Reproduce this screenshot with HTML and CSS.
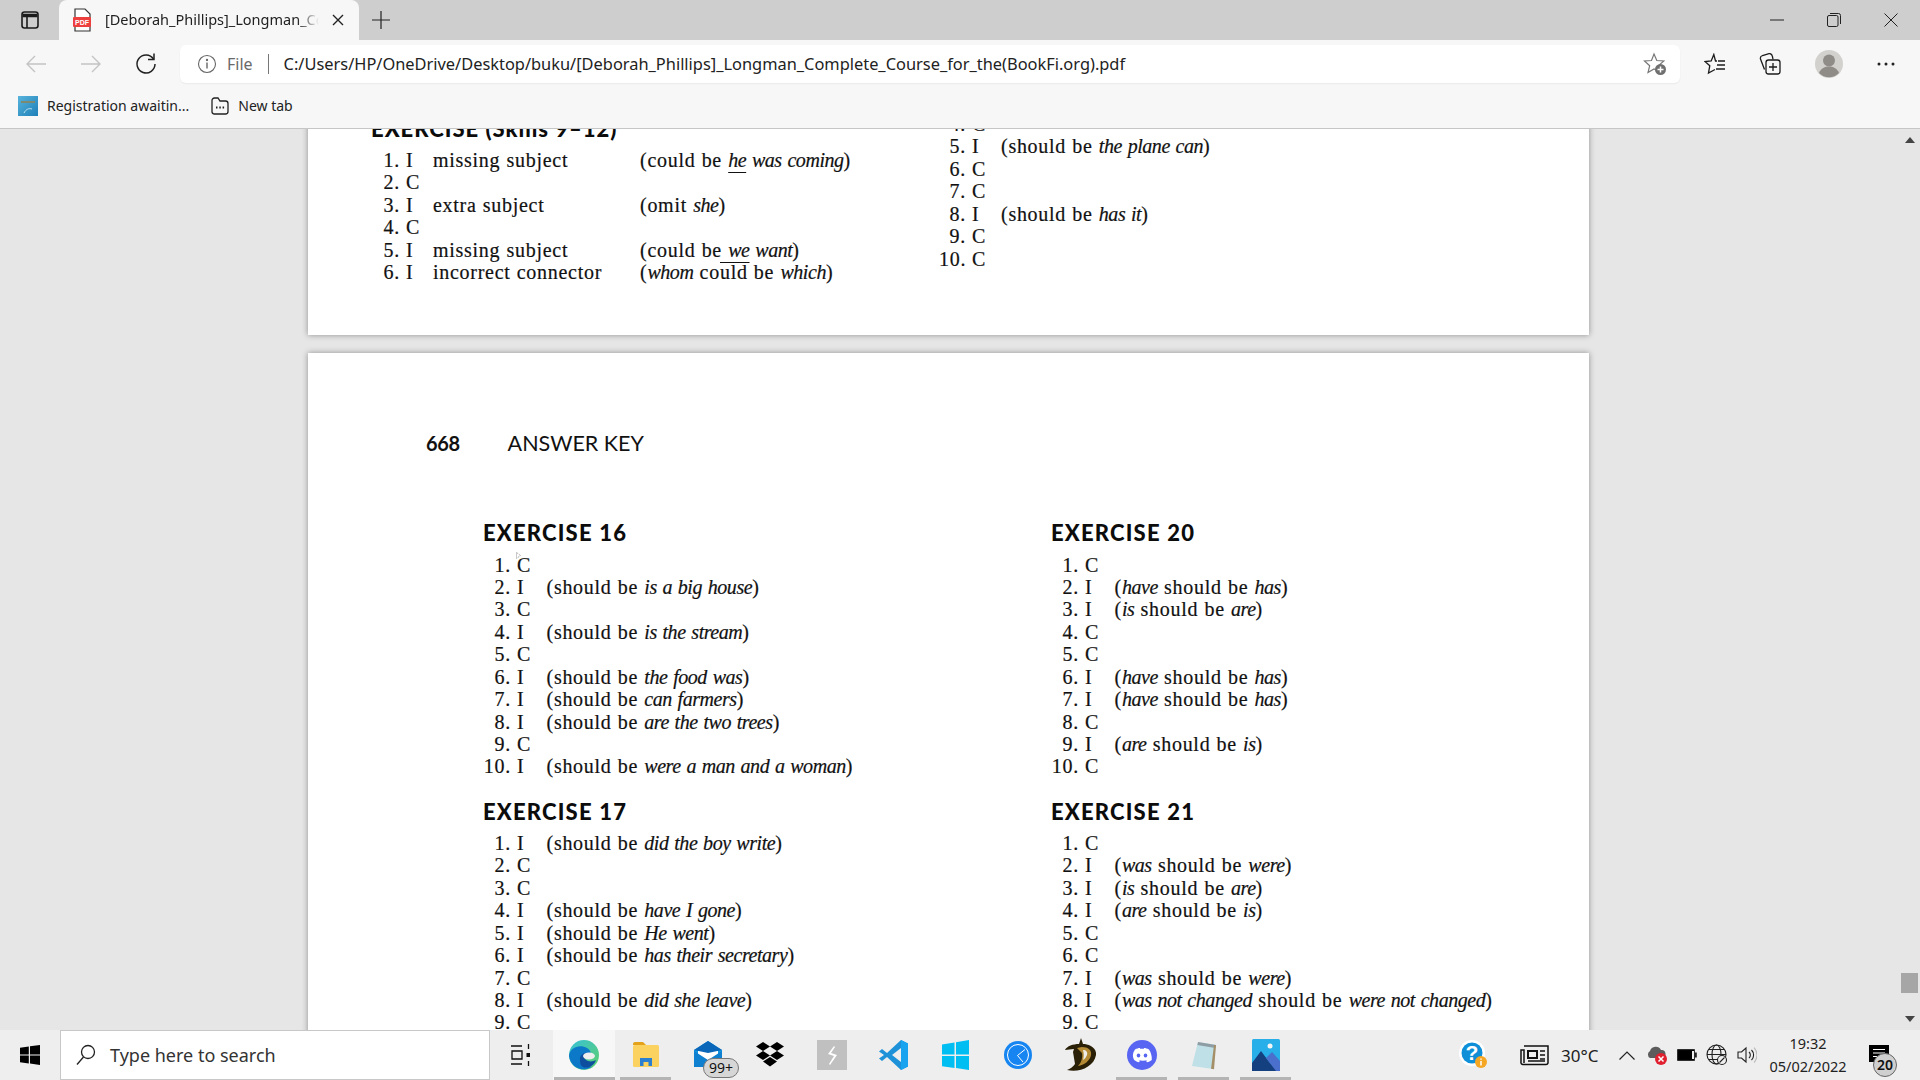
FILE: index.html
```html
<!DOCTYPE html>
<html lang="en">
<head>
<meta charset="utf-8">
<title>Longman Complete Course</title>
<link rel="stylesheet" href="styles.css">
</head>
<body>
<header class="tabstrip">
  <div class="strip-btn">
    <svg width="20" height="20" viewBox="0 0 20 20" fill="none" stroke="#1b1b1b" stroke-width="1.6"><rect x="2" y="2" width="16" height="16" rx="2.5"/><path d="M2.5 5.5h15" stroke-width="3.5"/><path d="M7 5v13"/></svg>
  </div>
  <div class="tab">
    <svg class="tab-icon" width="20" height="24" viewBox="0 0 20 24"><path d="M3 1h10l5 5v17H3z" fill="#fff" stroke="#333" stroke-width="1.2"/><rect x="1" y="9" width="18" height="10" rx="1" fill="#ee3f3f"/><text x="10" y="17" class="pdf-label" text-anchor="middle">PDF</text></svg>
    <span class="tab-title">[Deborah_Phillips]_Longman_Complete_Course_for_the(BookFi.org).pdf</span>
    <svg class="tab-close" width="12" height="12" viewBox="0 0 12 12" stroke="#222" stroke-width="1.4"><path d="M1 1l10 10M11 1L1 11"/></svg>
  </div>
  <div class="new-tab">
    <svg width="18" height="18" viewBox="0 0 18 18" stroke="#222" stroke-width="1.2"><path d="M9 0v18M0 9h18"/></svg>
  </div>
  <div class="win-controls">
    <div class="win-btn"><svg width="14" height="14" viewBox="0 0 14 14" stroke="#222" stroke-width="1"><path d="M0 7h14"/></svg></div>
    <div class="win-btn"><svg width="14" height="14" viewBox="0 0 14 14" fill="none" stroke="#222" stroke-width="1"><rect x=".5" y="2.5" width="10.5" height="11" rx="1.5"/><path d="M3 .5h8.5a2 2 0 0 1 2 2V11"/></svg></div>
    <div class="win-btn"><svg width="14" height="14" viewBox="0 0 14 14" stroke="#222" stroke-width="1"><path d="M.5.5l13 13M13.500.5l-13 13"/></svg></div>
  </div>
</header>

<nav class="toolbar">
  <div class="nav-btn"><svg width="20" height="18" viewBox="0 0 20 18" fill="none" stroke="#c4c4c4" stroke-width="1.4"><path d="M20 9H1M9 1L1 9l8 8"/></svg></div>
  <div class="nav-btn"><svg width="20" height="18" viewBox="0 0 20 18" fill="none" stroke="#c4c4c4" stroke-width="1.4"><path d="M0 9h19M11 1l8 8-8 8"/></svg></div>
  <div class="nav-btn"><svg width="22" height="22" viewBox="0 0 22 22" fill="none" stroke="#222" stroke-width="1.5"><path d="M18.500 6A9 9 0 1 0 20 11"/><path d="M19 .5V6.500h-6"/></svg></div>
  <div class="address">
    <svg class="info" width="20" height="20" viewBox="0 0 20 20" fill="none" stroke="#666" stroke-width="1.1"><circle cx="10" cy="10" r="8.500"/><path d="M10 8.500v6" stroke-width="1.4"/><circle cx="10" cy="6" r=".6" fill="#666"/></svg>
    <span class="scheme">File</span>
    <span class="addr-sep"></span>
    <span class="url">C:/Users/HP/OneDrive/Desktop/buku/[Deborah_Phillips]_Longman_Complete_Course_for_the(BookFi.org).pdf</span>
    <svg class="star-add" width="24" height="24" viewBox="0 0 24 24"><path d="M11 2l2.800 6.500 7 .5-5.300 4.600 1.700 6.600L11 17l-6 3.600 1.700-6.900L1.500 9l7-.5z" fill="none" stroke="#777" stroke-width="1.2"/><circle cx="17.500" cy="17.500" r="5.500" fill="#6f6f6f"/><path d="M17.500 14.500v6M14.500 17.500h6" stroke="#fff" stroke-width="1.500"/></svg>
  </div>
  <div class="tools">
    <div class="tool"><svg width="22" height="22" viewBox="0 0 22 22" fill="none" stroke="#1c1c1c" stroke-width="1.3"><path d="M13 8h-1.500L9.800 1.500 7.200 8 1 8.500l4.800 4.200L4.500 20l6.500-3.500M14 8h7M13 12h8M12 16h9"/></svg></div>
    <div class="tool tool-nudged"><svg width="22" height="22" viewBox="0 0 22 22" fill="none" stroke="#1c1c1c" stroke-width="1.3"><path d="M5.500 16.500L1.500 6C1 4 2 3 3.500 2.500L10 .7c2-.4 3 .5 3.500 3L14 6.500"/><rect x="7" y="7" width="14" height="14" rx="2.500"/><path d="M14 10v8M10 14h8"/></svg></div>
    <div class="tool"><svg width="28" height="28" viewBox="0 0 28 28"><circle cx="14" cy="14" r="14" fill="#d3d1cd"/><circle cx="14" cy="10.500" r="6" fill="#8f8c88"/><path d="M4 23c2-5 6-6.500 10-6.500s8 1.500 10 6.500a14 14 0 0 1-20 0z" fill="#8f8c88"/></svg></div>
    <div class="tool"><svg width="18" height="4" viewBox="0 0 18 4" fill="#222"><circle cx="2" cy="2" r="1.500"/><circle cx="9" cy="2" r="1.500"/><circle cx="16" cy="2" r="1.500"/></svg></div>
  </div>
</nav>

<nav class="bookmarks">
  <div class="bookmark">
    <svg width="20" height="20" viewBox="0 0 20 20"><defs><linearGradient id="bm" x1="0" y1="0" x2="1" y2="1"><stop offset="0" stop-color="#58b4dc"/><stop offset="1" stop-color="#1f7fb8"/></linearGradient></defs><rect width="20" height="20" fill="url(#bm)"/><path d="M3 5h14v2H3z" fill="#7d8a70"/><path d="M6 17c2-4 5-5 8-4" stroke="#bfe3f2" fill="none"/></svg>
    <span>Registration awaitin...</span>
  </div>
  <div class="bookmark">
    <svg width="18" height="18" viewBox="0 0 18 18" fill="none" stroke="#222" stroke-width="1.3"><path d="M1 5V3.500A2.500 2.500 0 0 1 3.500 1H7l2 3h5.500A2.500 2.500 0 0 1 17 6.500v8a2.500 2.500 0 0 1-2.500 2.500h-11A2.500 2.500 0 0 1 1 14.500z"/><path d="M5 10.500h1.500M8.300 10.500h1.500M11.600 10.500h1.500" stroke-width="1.800"/></svg>
    <span>New tab</span>
  </div>
</nav>

<main class="workspace">
  <div class="viewer">
    <section class="page page-first">
      <div class="col col-first">
        <h2 class="ex-title">EXERCISE (Skills 9–12)</h2>
        <div class="row row-wide"><span class="n">1.</span><span class="a">I</span><span>missing subject</span><span>(could be <i><u>he</u> was coming</i>)</span></div>
        <div class="row row-wide"><span class="n">2.</span><span class="a">C</span></div>
        <div class="row row-wide"><span class="n">3.</span><span class="a">I</span><span>extra subject</span><span>(omit <i>she</i>)</span></div>
        <div class="row row-wide"><span class="n">4.</span><span class="a">C</span></div>
        <div class="row row-wide"><span class="n">5.</span><span class="a">I</span><span>missing subject</span><span>(could be <i><u>we</u> want</i>)</span></div>
        <div class="row row-wide"><span class="n">6.</span><span class="a">I</span><span>incorrect connector</span><span>(<i>whom</i> co<span class="ou">uld</span> be <i>which</i>)</span></div>
      </div>
      <div class="col col-second">
        <div class="row row-narrow"><span class="n">4.</span><span class="a">C</span></div>
        <div class="row row-narrow"><span class="n">5.</span><span class="a">I</span><span>(should be <i>the plane can</i>)</span></div>
        <div class="row row-narrow"><span class="n">6.</span><span class="a">C</span></div>
        <div class="row row-narrow"><span class="n">7.</span><span class="a">C</span></div>
        <div class="row row-narrow"><span class="n">8.</span><span class="a">I</span><span>(should be <i>has it</i>)</span></div>
        <div class="row row-narrow"><span class="n">9.</span><span class="a">C</span></div>
        <div class="row row-narrow"><span class="n">10.</span><span class="a">C</span></div>
      </div>
    </section>

    <section class="page page-second">
      <div class="running-head"><b>668</b><span>ANSWER KEY</span></div>
      <div class="columns">
        <div class="col">
          <h2 class="ex-title">EXERCISE 16</h2>
          <div class="row"><span class="n">1.</span><span class="a">C<svg class="cursor" width="6" height="8" viewBox="0 0 6 8" fill="none" stroke="#777" stroke-width=".8" stroke-dasharray="1 1"><path d="M.5.500v6l4-3z"/></svg></span></div>
          <div class="row"><span class="n">2.</span><span class="a">I</span><span>(should be <i>is a big house</i>)</span></div>
          <div class="row"><span class="n">3.</span><span class="a">C</span></div>
          <div class="row"><span class="n">4.</span><span class="a">I</span><span>(should be <i>is the stream</i>)</span></div>
          <div class="row"><span class="n">5.</span><span class="a">C</span></div>
          <div class="row"><span class="n">6.</span><span class="a">I</span><span>(should be <i>the food was</i>)</span></div>
          <div class="row"><span class="n">7.</span><span class="a">I</span><span>(should be <i>can farmers</i>)</span></div>
          <div class="row"><span class="n">8.</span><span class="a">I</span><span>(should be <i>are the two trees</i>)</span></div>
          <div class="row"><span class="n">9.</span><span class="a">C</span></div>
          <div class="row"><span class="n">10.</span><span class="a">I</span><span>(should be <i>were a man and a woman</i>)</span></div>
          <h2 class="ex-title ex-next">EXERCISE 17</h2>
          <div class="row"><span class="n">1.</span><span class="a">I</span><span>(should be <i>did the boy write</i>)</span></div>
          <div class="row"><span class="n">2.</span><span class="a">C</span></div>
          <div class="row"><span class="n">3.</span><span class="a">C</span></div>
          <div class="row"><span class="n">4.</span><span class="a">I</span><span>(should be <i>have I gone</i>)</span></div>
          <div class="row"><span class="n">5.</span><span class="a">I</span><span>(should be <i>He went</i>)</span></div>
          <div class="row"><span class="n">6.</span><span class="a">I</span><span>(should be <i>has their secretary</i>)</span></div>
          <div class="row"><span class="n">7.</span><span class="a">C</span></div>
          <div class="row"><span class="n">8.</span><span class="a">I</span><span>(should be <i>did she leave</i>)</span></div>
          <div class="row"><span class="n">9.</span><span class="a">C</span></div>
        </div>
        <div class="col">
          <h2 class="ex-title">EXERCISE 20</h2>
          <div class="row"><span class="n">1.</span><span class="a">C</span></div>
          <div class="row"><span class="n">2.</span><span class="a">I</span><span>(<i>have</i> should be <i>has</i>)</span></div>
          <div class="row"><span class="n">3.</span><span class="a">I</span><span>(<i>is</i> should be <i>are</i>)</span></div>
          <div class="row"><span class="n">4.</span><span class="a">C</span></div>
          <div class="row"><span class="n">5.</span><span class="a">C</span></div>
          <div class="row"><span class="n">6.</span><span class="a">I</span><span>(<i>have</i> should be <i>has</i>)</span></div>
          <div class="row"><span class="n">7.</span><span class="a">I</span><span>(<i>have</i> should be <i>has</i>)</span></div>
          <div class="row"><span class="n">8.</span><span class="a">C</span></div>
          <div class="row"><span class="n">9.</span><span class="a">I</span><span>(<i>are</i> should be <i>is</i>)</span></div>
          <div class="row"><span class="n">10.</span><span class="a">C</span></div>
          <h2 class="ex-title ex-next">EXERCISE 21</h2>
          <div class="row"><span class="n">1.</span><span class="a">C</span></div>
          <div class="row"><span class="n">2.</span><span class="a">I</span><span>(<i>was</i> should be <i>were</i>)</span></div>
          <div class="row"><span class="n">3.</span><span class="a">I</span><span>(<i>is</i> should be <i>are</i>)</span></div>
          <div class="row"><span class="n">4.</span><span class="a">I</span><span>(<i>are</i> should be <i>is</i>)</span></div>
          <div class="row"><span class="n">5.</span><span class="a">C</span></div>
          <div class="row"><span class="n">6.</span><span class="a">C</span></div>
          <div class="row"><span class="n">7.</span><span class="a">I</span><span>(<i>was</i> should be <i>were</i>)</span></div>
          <div class="row"><span class="n">8.</span><span class="a">I</span><span>(<i>was not changed</i> should be <i>were not changed</i>)</span></div>
          <div class="row"><span class="n">9.</span><span class="a">C</span></div>
        </div>
      </div>
    </section>
  </div>
  <aside class="scrollbar">
    <svg width="10" height="6" viewBox="0 0 10 6" fill="#444"><path d="M0 6l5-6 5 6z"/></svg>
    <div class="thumb"></div>
    <svg width="10" height="6" viewBox="0 0 10 6" fill="#444"><path d="M0 0l5 6 5-6z"/></svg>
  </aside>
</main>

<footer class="taskbar">
  <div class="start"><svg width="20" height="20" viewBox="0 0 20 20" fill="#000"><path d="M0 2.800L8.800 1.500v8H0zM10 1.300L20 0v9.500H10zM0 10.500h8.800v8L0 17.200zM10 10.500h10V20l-10-1.400z"/></svg></div>
  <div class="search">
    <svg width="20" height="24" viewBox="0 0 20 24" fill="none" stroke="#222" stroke-width="1.3"><circle cx="12" cy="9" r="6.500"/><path d="M7.500 14L1 21.500"/></svg>
    <span>Type here to search</span>
  </div>
  <div class="task-view"><svg width="20" height="24" viewBox="0 0 20 24" fill="none" stroke="#111" stroke-width="1.300"><path d="M1 3h11M1 21h11M2 8h10v8H2zM18.500 1v5M18.500 18v5"/><path d="M16.500 10h4v4h-4z" fill="#111" stroke="none"/></svg></div>
  <div class="apps">
    <div class="app app-active">
      <svg width="32" height="32" viewBox="0 0 32 32"><defs><linearGradient id="e1" x1="0" y1="0" x2="1" y2="1"><stop offset="0" stop-color="#38c0d8"/><stop offset="1" stop-color="#5ed16a"/></linearGradient></defs><circle cx="16" cy="16" r="15" fill="url(#e1)"/><path d="M1 17C2 8 12 5 19 9c5 3 5 9 1 9-4 1-9-1-8 4 1 4 7 7 12 5.500C18 33 3 31 1 17z" fill="#0c78c8"/><path d="M12 22c-1-5 3-9 8-8-3 1-5 3-3 6 2 3 8 3 11 1-2 6-8 9-13 7-2-1-3-3-3-6z" fill="#0e4e9e"/><ellipse cx="21" cy="17" rx="6" ry="3.500" fill="#eee"/></svg>
    </div>
    <div class="app app-open">
      <svg width="28" height="28" viewBox="0 0 28 28"><path d="M1 3a2 2 0 0 1 2-2h8l3 3h-13z" fill="#e3a21a"/><rect x="1" y="4" width="26" height="22" rx="1.500" fill="#fbd25f"/><path d="M8 25v-8h12v8h-3.500v-4h-5v4z" fill="#2a7fd0"/></svg>
    </div>
    <div class="app">
      <svg width="30" height="30" viewBox="0 0 30 30"><path d="M1 10L15 1l14 9v17H1z" fill="#1295e0"/><path d="M5 11h20v9l-10 5-10-5z" fill="#fff"/><path d="M1 11l14 9 14-9v16H1z" fill="#0f7fd0"/><path d="M1 10L15 1l14 9-14 3z" fill="#0a66b8"/></svg>
      <span class="count">99+</span>
    </div>
    <div class="app">
      <svg width="30" height="28" viewBox="0 0 30 28" fill="#000"><path d="M8 1l7 4.500L8 10 1 5.500zM22 1l7 4.500-7 4.500-7-4.500zM8 10l7 4.500L8 19l-7-4.500zM22 10l7 4.500-7 4.500-7-4.500zM8 20.500l7-4.500 7 4.500-7 5z"/></svg>
    </div>
    <div class="app">
      <svg width="30" height="30" viewBox="0 0 30 30"><rect width="30" height="30" fill="#c0c0c0"/><path d="M17 6l-6 8 6 2-5 8 1 1 7-10-6-2 4-6z" fill="#fff"/></svg>
    </div>
    <div class="app">
      <svg width="30" height="32" viewBox="0 0 30 32"><path d="M22 1l7 3.500v23L22 31 8 18 3 22l-3-2.500L5 16 0 12.500 3 10l5 4z" fill="#1e92d8"/><path d="M22 1l7 3.500v23L22 31z" fill="#1aa3ef"/><path d="M22 9v14l-9-7z" fill="#eee"/></svg>
    </div>
    <div class="app">
      <svg width="28" height="30" viewBox="0 0 28 30" fill="#00bdf2"><path d="M0 4.500L12.500 2.500v12H0zM14 2.200L27 0v14.500H14zM0 16h12.500v12L0 26.200zM14 16h13v14l-13-2z"/></svg>
    </div>
    <div class="app">
      <svg width="28" height="28" viewBox="0 0 28 28" fill="none"><circle cx="14" cy="14" r="14" fill="#1685f2"/><circle cx="14" cy="14" r="10.500" stroke="#fff" stroke-width="1"/><path d="M21 8.500l-7.500 6 5.500 6.500" stroke="#fff" stroke-width="1"/></svg>
    </div>
    <div class="app">
      <svg width="32" height="34" viewBox="0 0 32 34"><path d="M17 0l-2 6C9 6 3 8 1 12l9-1-1 3 2 12c-2 3-5 5-8 6 12 3 27-3 29-15C33 9 24 6 19 6z" fill="#2a2008"/><path d="M13 10l5-1c6 0 10 3 9 8-1 6-7 10-13 11 3-3 5-8 4-13z" fill="#b58a35"/><path d="M19 12c3 0 5 2 4 5-1 2-2 4-4 5 1-3 1-7 0-10z" fill="#efeee9"/></svg>
    </div>
    <div class="app app-open">
      <svg width="30" height="30" viewBox="0 0 30 30"><circle cx="15" cy="15" r="15" fill="#5865f2"/><path d="M8 9.500c2-1 3.500-1.500 5-1.500l.5 1c1-.2 2-.2 3 0l.5-1c1.500 0 3 .5 5 1.500 2 3 3 6.500 2.800 10.500-1.500 1.200-3.200 2-4.800 2.300l-1-1.600c.7-.2 1.300-.6 1.800-1-3 1.500-6.600 1.500-9.600 0 .5.400 1.100.8 1.800 1l-1 1.600c-1.600-.3-3.300-1.100-4.800-2.300C5 16 6 12.500 8 9.500z" fill="#fff"/><ellipse cx="11.500" cy="15.500" rx="1.800" ry="2.100" fill="#5865f2"/><ellipse cx="18.500" cy="15.500" rx="1.800" ry="2.100" fill="#5865f2"/></svg>
    </div>
    <div class="app app-open">
      <svg width="28" height="30" viewBox="0 0 28 30"><path d="M8 2l18 3-3 24-21-3z" fill="#bfe0e6"/><path d="M8 2l18 3-.6 3-18-3z" fill="#8d9da3"/><path d="M24 5l2 .3-2 24-3-.5z" fill="#a58f68"/></svg>
    </div>
    <div class="app app-open">
      <svg width="28" height="32" viewBox="0 0 28 32"><rect width="28" height="32" rx="1.500" fill="#28aee8"/><circle cx="18" cy="7" r="2.500" fill="#f5f5f5"/><path d="M0 24l9-12 9 12 10 8H0z" fill="#14407f"/><path d="M14 19l6-6 8 9v10h-4z" fill="#4a6fcc"/></svg>
    </div>
  </div>
  <div class="tray">
    <div class="tray-help">
      <svg width="30" height="30" viewBox="0 0 30 30"><circle cx="13" cy="13" r="13" fill="#fff"/><circle cx="13" cy="13" r="10.500" fill="#0f8fd8"/><text x="13" y="20" class="help-q" text-anchor="middle">?</text><circle cx="22" cy="22" r="6" fill="#f5a623"/><path d="M22 21v4.500M22 18.500v1.200" stroke="#fff" stroke-width="1.500"/></svg>
    </div>
    <div class="weather">
      <svg width="30" height="22" viewBox="0 0 30 22" fill="none" stroke="#111" stroke-width="1.500"><path d="M4 2h24v17a2 2 0 0 1-2 1.500H3A2 2 0 0 1 1 18V6h3v13"/><path d="M8 7h9v7H8z" stroke-width="2"/><path d="M20 7h5M20 11h5M20 15h5M8 17h17" /></svg>
      <span>30°C</span>
    </div>
    <div class="tray-icon"><svg width="16" height="9" viewBox="0 0 16 9" fill="none" stroke="#222" stroke-width="1.200"><path d="M.500 8.500L8 1l7.500 7.500"/></svg></div>
    <div class="tray-icon"><svg width="22" height="22" viewBox="0 0 22 22"><path d="M4 14a4 4 0 0 1 0-7 6 6 0 0 1 11-1 4 4 0 0 1 1 8z" fill="#5c5c5c"/><circle cx="15" cy="15" r="6" fill="#e0202f"/><path d="M12.500 12.500l5 5M17.500 12.500l-5 5" stroke="#fff" stroke-width="1.500"/></svg></div>
    <div class="tray-icon"><svg width="20" height="12" viewBox="0 0 20 12"><rect x=".7" y=".7" width="16.600" height="10.600" fill="#000" stroke="#111" stroke-width="1"/><rect x="18" y="3.500" width="1.800" height="5" fill="#222"/><rect x="15" y="2" width="2" height="8" fill="#eee"/></svg></div>
    <div class="tray-icon"><svg width="22" height="22" viewBox="0 0 22 22" fill="none" stroke="#222" stroke-width="1.100"><circle cx="10.500" cy="10.500" r="9.500"/><ellipse cx="10.500" cy="10.500" rx="4.500" ry="9.500"/><path d="M1 10.500h19M2.500 5.500h16M2.500 15.500h16"/><circle cx="16" cy="16" r="4.500" fill="#eee"/><path d="M13.500 18.500l5-5"/></svg></div>
    <div class="tray-icon"><svg width="20" height="20" viewBox="0 0 20 20" fill="none" stroke="#222" stroke-width="1.100"><path d="M1 7h3.500L9 3v14l-4.500-4H1z"/><path d="M12 7a4 4 0 0 1 0 6M14.500 5a7 7 0 0 1 0 10"/><path d="M17 2.500a11 11 0 0 1 0 15" stroke="#bbb"/></svg></div>
    <div class="clock"><span>19:32</span><span>05/02/2022</span></div>
    <div class="notify">
      <svg width="20" height="18" viewBox="0 0 20 18"><path d="M0 0h20v17H0z" fill="#000"/><path d="M4 4.500h12M4 8h12M4 11.500h8" stroke="#fff"/></svg>
      <span class="notify-count">20</span>
    </div>
  </div>
</footer>
</body>
</html>
```

FILE: styles.css
```css
* { box-sizing: border-box; }
html, body { margin: 0; height: 100%; }
body {
  width: 1920px; height: 1080px; overflow: hidden;
  display: flex; flex-direction: column;
  font-family: "Noto Sans", "Open Sans", sans-serif;
  color: #1a1a1a; background: #e6e6e6;
}
svg { display: block; flex: none; }

/* tab strip */
.tabstrip { height: 40px; flex: none; display: flex; background: #cecece; }
.strip-btn { width: 59px; display: flex; align-items: center; justify-content: center; padding-left: 1px; }
.tab {
  width: 300px; height: 40px; background: #f7f7f7; border-radius: 8px 8px 0 0;
  display: flex; align-items: center; padding-left: 13px;
}
.pdf-label { font: 700 7px "Liberation Sans", sans-serif; fill: #fff; }
.tab-title {
  width: 214px; margin: -2px 0 0 13px; overflow: hidden; white-space: nowrap;
  font-size: 14.5px; line-height: 22px; color: #222;
  -webkit-mask-image: linear-gradient(to right, #000 90%, transparent);
  mask-image: linear-gradient(to right, #000 90%, transparent);
}
.tab-close { margin-left: 13px; }
.new-tab { width: 42px; display: flex; align-items: center; justify-content: center; padding-left: 1px; }
.win-controls { margin-left: auto; display: flex; }
.win-btn { width: 57px; display: flex; align-items: center; justify-content: center; padding-right: 2px; }

/* toolbar */
.toolbar { height: 48px; flex: none; display: flex; align-items: center; background: #f7f7f7; padding-left: 8px; }
.nav-btn { width: 55px; display: flex; align-items: center; justify-content: center; }
.address {
  width: 1500px; height: 38px; margin-left: 7px; margin-top: -1px;
  background: #fff; border-radius: 6px; box-shadow: 0 1px 2px rgba(0,0,0,.06);
  display: flex; align-items: center; padding-left: 17px; position: relative;
  font-size: 16px;
}
.scheme { margin-left: 10px; color: #6a6a6a; }
.addr-sep { width: 1px; height: 20px; background: #777; margin: 0 15px 0 15px; }
.url { color: #222; white-space: nowrap; font-size: 16.4px; }
.star-add { margin-left: auto; margin-right: 13px; }
.tools { display: flex; margin-left: 6px; padding-right: 2px; }
.tool { width: 57px; display: flex; align-items: center; justify-content: center; }
.tool-nudged { padding-right: 4px; }

/* bookmarks */
.bookmarks {
  height: 41px; flex: none; display: flex; align-items: center; gap: 22px;
  background: #f7f7f7; border-bottom: 1px solid #c6c6c6; padding: 0 0 5px 18px;
  font-size: 14px; color: #222;
}
.bookmark { display: flex; align-items: center; gap: 9px; }

/* pdf viewer */
.workspace { flex: 1; min-height: 0; display: flex; overflow: hidden; background: #e6e6e6; }
.viewer { width: 1899px; padding-left: 308px; overflow: hidden; }
.page {
  width: 1281px; background: #fff;
  box-shadow: 0 0 6px rgba(0,0,0,.38);
  font: 20px/22.450px "Liberation Serif", "Times New Roman", serif;
  color: #111;
}
.page i { letter-spacing: -.45px; word-spacing: 1.200px; }
.page-first {
  height: 233px; margin-top: -27px;
  display: flex; overflow: hidden; padding-left: 63px;
}
.col-first { width: 568px; padding-top: 13px; }
.col-second { padding-top: 11px; }
.page-second { height: 1000px; margin-top: 18px; padding: 76px 0 0 118px; }
.running-head {
  height: 28px; display: flex; align-items: center;
  font: 21.500px/28px Lato, sans-serif; color: #111; gap: 48px;
}
.running-head b { font-weight: 700; font-size: 20px; letter-spacing: -.4px; }
.columns { display: grid; grid-template-columns: 568px 1fr; margin: 62px 0 0 57px; }
.ex-title {
  margin: 0 0 6.500px; height: 28px;
  font: 900 22px/28px Lato, sans-serif; color: #0c0c0c; letter-spacing: 1.200px;
}
.ex-next { margin-top: 20px; margin-bottom: 6px; }
.col-first .ex-title { margin-bottom: 0; height: 34px; letter-spacing: 1px; }
.row {
  display: grid; grid-template-columns: 34px 29.500px auto;
  height: 22.450px; white-space: nowrap; letter-spacing: .72px; word-spacing: .5px;
  -webkit-text-stroke: .2px #111;
}
.row-wide { grid-template-columns: 35px 27px 207px auto; }
.row-narrow { grid-template-columns: 33px 29px auto; }
.n { text-align: right; padding-right: 6px; }
.a { position: relative; }
.cursor { position: absolute; left: -1px; top: -2px; }
.ou { position: relative; }
.ou::before { content: ""; position: absolute; left: 0; right: 0; top: 1px; height: 1px; background: #111; }
.page u { text-underline-offset: 5px; text-decoration-thickness: 1px; }

.scrollbar {
  width: 21px; background: #e6e6e6; display: flex; flex-direction: column; align-items: center;
  padding-top: 8px;
}
.thumb { width: 17px; height: 20px; background: #a6a6a6; margin-top: 830px; }
.scrollbar svg:last-child { margin-top: 23px; }

/* taskbar */
.taskbar { height: 50px; flex: none; display: flex; align-items: center; background: #eeeeee; }
.start { width: 60px; display: flex; justify-content: center; }
.search {
  width: 430px; height: 50px; background: #fff; border: 1px solid #c8c8c8;
  display: flex; align-items: center; padding-left: 15px; gap: 14px;
  font-size: 18px; color: #333;
}
.task-view { width: 63px; display: flex; justify-content: center; padding-right: 4px; }
.apps { display: flex; }
.app { width: 62px; height: 50px; display: flex; align-items: center; justify-content: center; position: relative; }
.app-active { background: #f7f7f7; }
.app-active::after, .app-open::after {
  content: ""; position: absolute; bottom: 0; left: 5px; right: 6px; height: 3px; background: #b4b4b4;
}
.app-active::after { left: 1px; right: 0; }
.count {
  position: absolute; left: 26px; top: 28px; width: 36px; height: 20px;
  border: 1px solid #777; border-radius: 10px; background: #d6d6d6;
  font-size: 14px; line-height: 18px; text-align: center; color: #111;
}
.tray { margin-left: auto; display: flex; align-items: center; }
.tray-help { width: 30px; margin: 0 31px 0 2px; }
.help-q { font: 700 21px "Liberation Sans", sans-serif; fill: #fff; }
.weather { width: 92px; display: flex; align-items: center; gap: 11px; font-size: 17px; color: #222; }
.tray-icon { width: 30px; display: flex; justify-content: center; }
.clock {
  width: 92px; display: flex; flex-direction: column; align-items: center; gap: 3px;
  margin-top: -2px;
  font-size: 14.500px; line-height: 20px; color: #222;
}
.notify { width: 66px; height: 50px; position: relative; padding: 15px 0 0 15px; }
.notify-count {
  position: absolute; left: 19px; top: 23px; width: 24px; height: 24px;
  border: 1px solid #666; border-radius: 50%; background: #cfcfcf;
  font-size: 14px; font-weight: 600; line-height: 22px; text-align: center; color: #111;
}
```
